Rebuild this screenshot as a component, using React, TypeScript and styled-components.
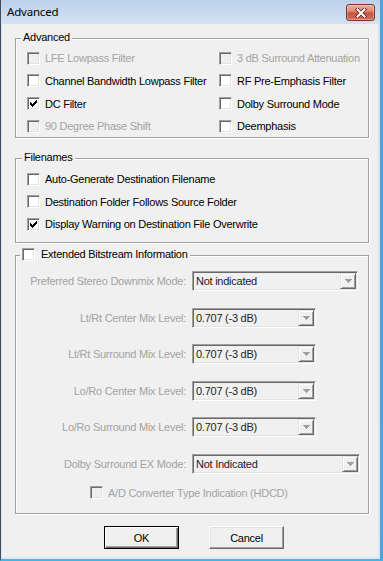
import React from "react";
import styled, { createGlobalStyle, css } from "styled-components";

const GlobalStyle = createGlobalStyle`
  html, body { margin: 0; padding: 0; background: #3eb8e7; }
  body { font-family: "Liberation Sans", Arial, sans-serif; }
  #root { width: 383px; height: 561px; }
`;

const Window = styled.div`
  width: 383px;
  height: 561px;
  box-sizing: border-box;
  display: flex;
  flex-direction: column;
  background: linear-gradient(to bottom, #bcd1ea 0px, #d3e2f2 24px, #dbe7f4 100%);
  border-left: 1px solid #434d5a;
  border-right: 3px solid #4ca4de;
  border-bottom: 2px solid #3eb8e7;
  padding: 0 2px 2px 1px;
`;

const TitleBar = styled.div`
  height: 24px;
  flex: none;
  display: flex;
  align-items: flex-start;
  justify-content: space-between;
  padding: 0 3px 0 5px;
`;

const Title = styled.div`
  font-family: "Noto Sans", "Open Sans", sans-serif;
  font-size: 11.5px;
  letter-spacing: -0.2px;
  line-height: 24px;
  color: #000;
`;

const CloseButton = styled.div`
  margin-top: 4px;
  width: 29px;
  height: 17px;
  box-sizing: border-box;
  border: 1px solid #7d3326;
  border-radius: 3px;
  background: linear-gradient(to bottom, #eab0a2 0%, #dc8a76 40%, #c5553c 55%, #d0745a 100%);
  box-shadow: inset 0 0 0 1px rgba(255, 255, 255, 0.3);
  display: flex;
  align-items: center;
  justify-content: center;
`;

const Client = styled.div`
  flex: 1;
  background: #f0f0f0;
  display: flex;
  flex-direction: column;
  padding: 0 9px 0 13px;
  font-size: 11px;
  letter-spacing: -0.25px;
  color: #000;
`;

const GroupBox = styled.div<{ $top: number; $height: number }>`
  position: relative;
  box-sizing: border-box;
  flex: none;
  margin-top: ${(p) => p.$top}px;
  height: ${(p) => p.$height}px;
  border: 1px solid #a0a0a0;
  box-shadow: inset 1px 1px 0 #fff, 1px 1px 0 #fff;
`;

const Legend = styled.div<{ $left: number }>`
  position: absolute;
  top: -8px;
  left: ${(p) => p.$left}px;
  height: 13px;
  line-height: 13px;
  padding: 0 2px 0 2px;
  background: #f0f0f0;
  display: flex;
  align-items: center;
  gap: 6px;
  white-space: nowrap;
`;

const CheckGrid = styled.div<{ $cols: string; $row: number; $padTop: number }>`
  display: grid;
  grid-template-columns: ${(p) => p.$cols};
  grid-auto-rows: ${(p) => p.$row}px;
  align-items: center;
  padding: ${(p) => p.$padTop}px 0 0 11px;
`;

const CheckItem = styled.div<{ $disabled?: boolean }>`
  display: flex;
  align-items: center;
  gap: 5px;
  white-space: nowrap;
  color: ${(p) => (p.$disabled ? "#a3a3a3" : "#000")};
`;

const Box = styled.span<{ $disabled?: boolean }>`
  width: 13px;
  height: 13px;
  box-sizing: border-box;
  flex: none;
  border: 1px solid;
  border-color: #a0a0a0 #fff #fff #a0a0a0;
  box-shadow: inset 1px 1px 0 #696969, inset -1px -1px 0 #e3e3e3;
  background: ${(p) => (p.$disabled ? "#f0f0f0" : "#fff")};
  display: flex;
  align-items: center;
  justify-content: center;
`;

const FormGrid = styled.div`
  display: grid;
  grid-template-columns: 170px auto;
  column-gap: 6px;
  grid-auto-rows: 36.5px;
  align-items: center;
  padding-top: 6.75px;
`;

const FieldLabel = styled.span`
  text-align: right;
  white-space: nowrap;
  color: #a3a3a3;
`;

const Combo = styled.div<{ $w: number }>`
  width: ${(p) => p.$w}px;
  height: 20px;
  box-sizing: border-box;
  border: 1px solid;
  border-color: #a0a0a0 #fff #fff #a0a0a0;
  box-shadow: inset 1px 1px 0 #696969, inset -1px -1px 0 #e3e3e3;
  background: #f0f0f0;
  display: flex;
  align-items: center;
  padding: 1px;
`;

const ComboText = styled.span`
  flex: 1;
  padding-left: 2px;
  color: #222;
  white-space: nowrap;
`;

const DropButton = styled.span`
  width: 16px;
  height: 16px;
  box-sizing: border-box;
  border: 1px solid;
  border-color: #e3e3e3 #696969 #696969 #e3e3e3;
  box-shadow: inset 1px 1px 0 #fff, inset -1px -1px 0 #a0a0a0;
  background: #f0f0f0;
  display: flex;
  align-items: center;
  justify-content: center;
`;

const StandaloneRow = styled.div`
  height: 22px;
  display: flex;
  align-items: center;
  padding-left: 74px;
`;

const ButtonRow = styled.div`
  display: flex;
  justify-content: center;
  gap: 30px;
  margin-top: 12px;
  padding-left: 4px;
`;

const Button = styled.button<{ $default?: boolean }>`
  width: 75px;
  height: 23px;
  box-sizing: border-box;
  margin: 0;
  padding: 0;
  font: inherit;
  letter-spacing: inherit;
  color: #000;
  background: #f0f0f0;
  border: 1px solid;
  border-color: #fff #696969 #696969 #fff;
  box-shadow: inset -1px -1px 0 #a0a0a0, inset 1px 1px 0 #e3e3e3;
  ${(p) =>
    p.$default &&
    css`
      border-color: #000;
      box-shadow: inset 1px 1px 0 #fff, inset -1px -1px 0 #696969, inset -2px -2px 0 #a0a0a0;
    `}
`;

const CheckMark = () => (
  <svg width="7" height="7" viewBox="0 0 7 7" shapeRendering="crispEdges">
    <path
      fill="#000"
      d="M6 0h1v1h-1z M5 1h2v1h-2z M0 2h1v1h-1z M4 2h3v1h-3z M0 3h2v1h-2z M3 3h3v1h-3z M0 4h5v1h-5z M1 5h3v1h-3z M2 6h1v1h-1z"
    />
  </svg>
);

const Arrow = () => (
  <svg width="7" height="4" viewBox="0 0 7 4" shapeRendering="crispEdges">
    <path fill="#a0a0a0" d="M0 0h7v1h-7z M1 1h5v1h-5z M2 2h3v1h-3z M3 3h1v1h-1z" />
  </svg>
);

const CloseX = () => (
  <svg width="12" height="10" viewBox="0 0 12 10">
    <path d="M2.5 1.5 L9.5 8.5 M9.5 1.5 L2.5 8.5" stroke="#5b2419" strokeWidth="3.6" strokeLinecap="square" />
    <path d="M2.5 1.5 L9.5 8.5 M9.5 1.5 L2.5 8.5" stroke="#fff" strokeWidth="2" strokeLinecap="square" />
  </svg>
);

type CheckProps = { label: string; checked?: boolean; disabled?: boolean };

const Check: React.FC<CheckProps> = ({ label, checked, disabled }) => (
  <CheckItem $disabled={disabled}>
    <Box $disabled={disabled}>{checked && <CheckMark />}</Box>
    <span>{label}</span>
  </CheckItem>
);

const ComboBox: React.FC<{ value: string; width: number }> = ({ value, width }) => (
  <Combo $w={width}>
    <ComboText>{value}</ComboText>
    <DropButton>
      <Arrow />
    </DropButton>
  </Combo>
);

const fields: { label: string; value: string; width: number }[] = [
  { label: "Preferred Stereo Downmix Mode:", value: "Not indicated", width: 166 },
  { label: "Lt/Rt Center Mix Level:", value: "0.707 (-3 dB)", width: 124 },
  { label: "Lt/Rt Surround Mix Level:", value: "0.707 (-3 dB)", width: 124 },
  { label: "Lo/Ro Center Mix Level:", value: "0.707 (-3 dB)", width: 124 },
  { label: "Lo/Ro Surround Mix Level:", value: "0.707 (-3 dB)", width: 124 },
  { label: "Dolby Surround EX Mode:", value: "Not Indicated", width: 168 },
];

export default function App() {
  return (
    <>
      <GlobalStyle />
      <Window>
        <TitleBar>
          <Title>Advanced</Title>
          <CloseButton>
            <CloseX />
          </CloseButton>
        </TitleBar>
        <Client>
          <GroupBox $top={14} $height={100}>
            <Legend $left={5}>Advanced</Legend>
            <CheckGrid $cols="192px auto" $row={22.67} $padTop={8}>
              <Check label="LFE Lowpass Filter" disabled />
              <Check label="3 dB Surround Attenuation" disabled />
              <Check label="Channel Bandwidth Lowpass Filter" />
              <Check label="RF Pre-Emphasis Filter" />
              <Check label="DC Filter" checked />
              <Check label="Dolby Surround Mode" />
              <Check label="90 Degree Phase Shift" disabled />
              <Check label="Deemphasis" />
            </CheckGrid>
          </GroupBox>

          <GroupBox $top={20} $height={85}>
            <Legend $left={6}>Filenames</Legend>
            <CheckGrid $cols="auto" $row={22.5} $padTop={9}>
              <Check label="Auto-Generate Destination Filename" />
              <Check label="Destination Folder Follows Source Folder" />
              <Check label="Display Warning on Destination File Overwrite" checked />
            </CheckGrid>
          </GroupBox>

          <GroupBox $top={12} $height={259}>
            <Legend $left={4}>
              <Box />
              <span>Extended Bitstream Information</span>
            </Legend>
            <FormGrid>
              {fields.map((f) => (
                <React.Fragment key={f.label}>
                  <FieldLabel>{f.label}</FieldLabel>
                  <ComboBox value={f.value} width={f.width} />
                </React.Fragment>
              ))}
            </FormGrid>
            <StandaloneRow>
              <Check label="A/D Converter Type Indication (HDCD)" disabled />
            </StandaloneRow>
          </GroupBox>

          <ButtonRow>
            <Button $default>OK</Button>
            <Button>Cancel</Button>
          </ButtonRow>
        </Client>
      </Window>
    </>
  );
}
